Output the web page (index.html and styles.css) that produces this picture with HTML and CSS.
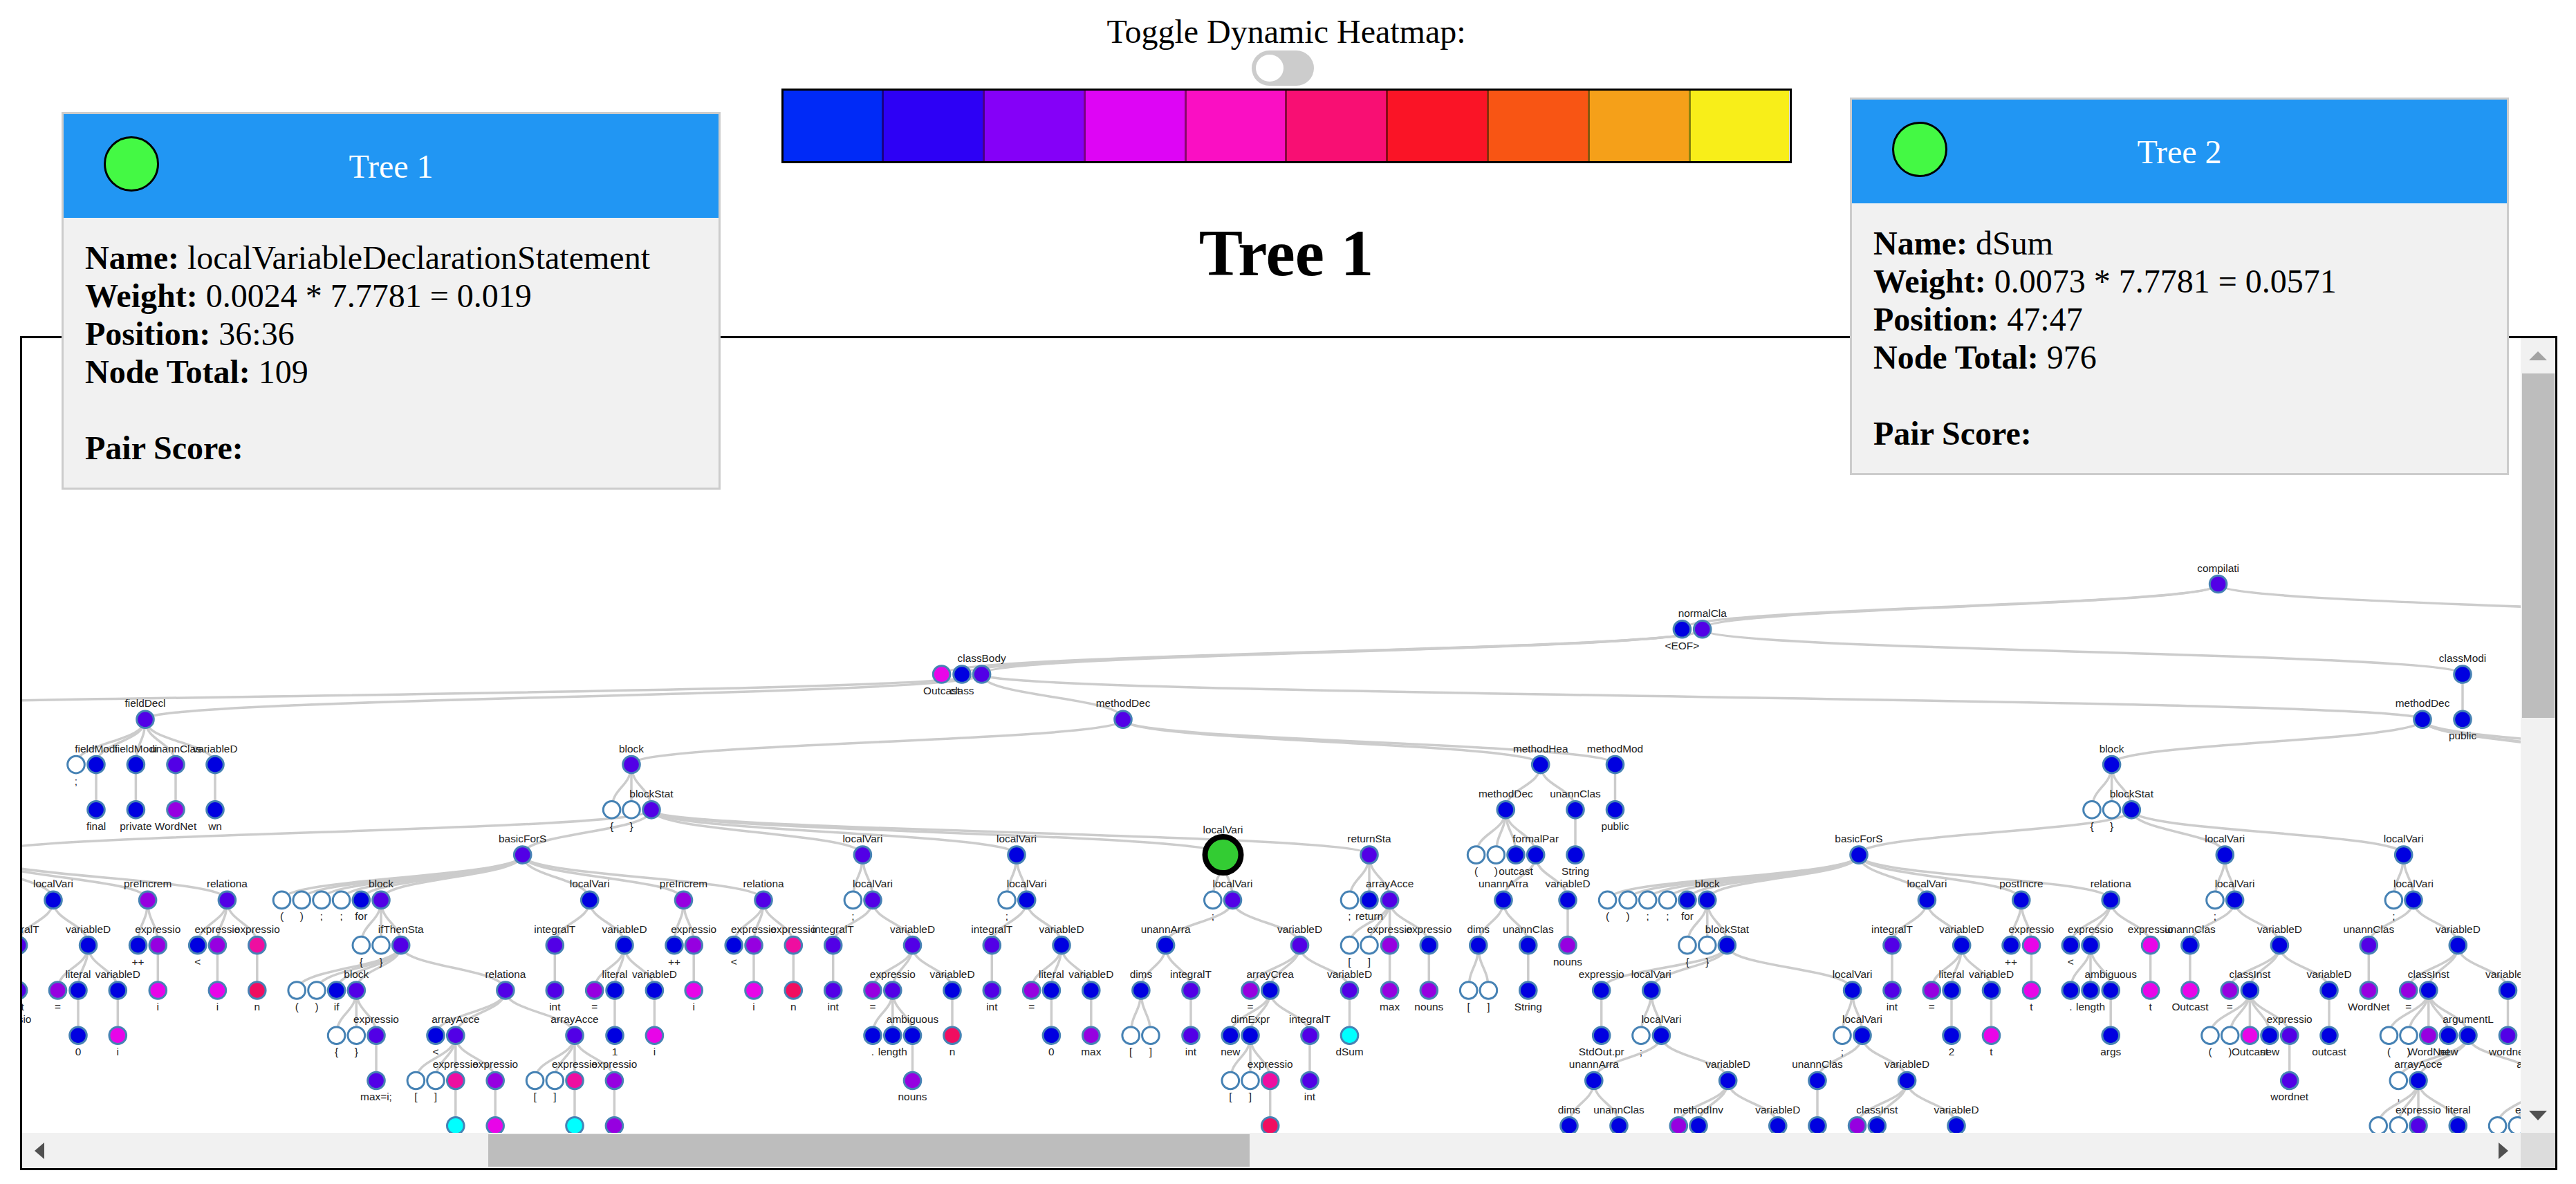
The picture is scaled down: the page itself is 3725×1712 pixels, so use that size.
FILE: index.html
```html
<!DOCTYPE html>
<html lang="en">

<head>
    <meta charset="UTF-8" />
    <meta name="viewport" content="width=device-width, initial-scale=1" />
    <title>Tree Compare</title>
    <link rel="stylesheet" href="styles.css">
</head>

<body>
    <div class="top">
        <div class="toggle-label">Toggle Dynamic Heatmap:</div>
        <div class="switch"><span class="knob"></span></div>
        <div class="legend">
            <span class="c1"></span><span class="c2"></span><span class="c3"></span><span class="c4"></span><span class="c5"></span>
            <span class="c6"></span><span class="c7"></span><span class="c8"></span><span class="c9"></span><span class="c10"></span>
        </div>
        <h1>Tree 1</h1>
    </div>

    <div class="info-card card-left">
        <div class="card-head">
            <span class="dot"></span>
            <span class="card-title">Tree 1</span>
        </div>
        <div class="card-body">
            <div><b>Name:</b> localVariableDeclarationStatement</div>
            <div><b>Weight:</b> 0.0024 * 7.7781 = 0.019</div>
            <div><b>Position:</b> 36:36</div>
            <div><b>Node Total:</b> 109</div>
            <div class="pair"><b>Pair Score:</b></div>
        </div>
    </div>

    <div class="info-card card-right">
        <div class="card-head">
            <span class="dot"></span>
            <span class="card-title">Tree 2</span>
        </div>
        <div class="card-body">
            <div><b>Name:</b> dSum</div>
            <div><b>Weight:</b> 0.0073 * 7.7781 = 0.0571</div>
            <div><b>Position:</b> 47:47</div>
            <div><b>Node Total:</b> 976</div>
            <div class="pair"><b>Pair Score:</b></div>
        </div>
    </div>

    <div class="frame">
        <svg id="tree" class="tree" viewBox="32 489 3613 1149"></svg>
        <div class="vbar">
            <div class="arrow"><span class="tri up"></span></div>
            <div class="vthumb"></div>
            <div class="grow"></div>
            <div class="arrow"><span class="tri down"></span></div>
        </div>
        <div class="hbar">
            <div class="arrow"><span class="tri left"></span></div>
            <div class="hgap"></div>
            <div class="hthumb"></div>
            <div class="grow"></div>
            <div class="arrow"><span class="tri right"></span></div>
        </div>
        <div class="corner"></div>
    </div>

    <script src="tree.js"></script>
</body>

</html>
```

FILE: styles.css
```css
body {
    margin: 0;
    background: white;
    font-family: "Liberation Serif", "Times New Roman", serif;
    font-size: 48px;
    line-height: 55px;
    color: black;
}

.top {
    padding: 18px 5px 0 0;
    text-align: center;
}

.switch {
    box-sizing: border-box;
    display: flex;
    align-items: center;
    width: 90px;
    height: 51px;
    margin: 0 auto;
    padding: 0 6px;
    position: relative;
    left: -5px;
    background: #ccc;
    border-radius: 26px;
}

.knob {
    width: 40px;
    height: 39px;
    background: white;
    border-radius: 50%;
}

.legend {
    box-sizing: border-box;
    display: flex;
    width: 1461px;
    height: 108px;
    margin: 4px auto 0;
    border: 3px solid black;
}

.legend span {
    flex: 1;
    border-left: 3px solid rgba(0, 0, 0, 0.45);
}

.legend span:first-child {
    border-left: none;
}

.c1 { background: #002af7; }
.c2 { background: #2d00f5; }
.c3 { background: #8500f8; }
.c4 { background: #de05f5; }
.c5 { background: #fa0fc3; }
.c6 { background: #f80f73; }
.c7 { background: #fa1426; }
.c8 { background: #f85514; }
.c9 { background: #f5a019; }
.c10 { background: #f8ee19; }

h1 {
    margin: 76px 0 65px;
    font-size: 95px;
    line-height: 109px;
    font-weight: bold;
}

.info-card {
    box-sizing: border-box;
    position: absolute;
    width: 953px;
    height: 546px;
    background: #f1f1f1;
    border: 3px solid #ccc;
    z-index: 2;
}

.card-left {
    left: 89px;
    top: 162px;
}

.card-right {
    left: 2675px;
    top: 141px;
}

.card-head {
    display: grid;
    grid-template-columns: 1fr auto 1fr;
    align-items: center;
    height: 150px;
    background: #2196f3;
    color: white;
}

.dot {
    box-sizing: border-box;
    width: 80px;
    height: 80px;
    margin: 0 0 6px 58px;
    background: #44f944;
    border: 3px solid black;
    border-radius: 50%;
}

.card-body {
    padding: 30px 31px;
}

.pair {
    margin-top: 55px;
}

.frame {
    box-sizing: border-box;
    display: grid;
    grid-template-columns: 3613px 50px;
    grid-template-rows: 1149px 51px;
    width: 3669px;
    height: 1206px;
    margin-left: 29px;
    border: 3px solid black;
}

.tree {
    display: block;
    width: 3613px;
    height: 1149px;
    font-family: "Liberation Sans", Arial, sans-serif;
    font-size: 15.4px;
}

.link {
    fill: none;
    stroke: #ccc;
    stroke-width: 3.5px;
}

.node {
    stroke: steelblue;
    stroke-width: 3px;
}

.node-label {
    fill: #222;
    text-anchor: middle;
}

.fill-w { fill: white; }
.fill-b { fill: #0000e0; }
.fill-i { fill: #5200e6; }
.fill-p { fill: #9600e0; }
.fill-m { fill: #e805e8; }
.fill-k { fill: #ee0ea0; }
.fill-r { fill: #f00e60; }
.fill-c { fill: #00ffff; }

.fill-g {
    fill: #33cc33;
    stroke: black;
    stroke-width: 8px;
}

.vbar {
    display: flex;
    flex-direction: column;
    align-items: center;
    background: #f1f1f1;
}

.hbar {
    display: flex;
    align-items: center;
    background: #f1f1f1;
}

.corner {
    background: #dcdcdc;
}

.grow {
    flex: 1;
}

.arrow {
    display: flex;
    flex: none;
    align-items: center;
    justify-content: center;
    width: 50px;
    height: 51px;
}

.vthumb {
    flex: none;
    width: 47px;
    height: 498px;
    background: #bdbdbd;
}

.hgap {
    flex: none;
    width: 624px;
}

.hthumb {
    flex: none;
    width: 1101px;
    height: 47px;
    background: #bdbdbd;
}

.tri {
    width: 0;
    height: 0;
    border-style: solid;
    border-color: transparent;
}

.up {
    border-width: 0 13px 13px;
    border-bottom-color: #a3a3a3;
}

.down {
    border-width: 14px 13px 0;
    border-top-color: #505050;
}

.left {
    border-width: 12px 14px 12px 0;
    border-right-color: #505050;
}

.right {
    border-width: 12px 0 12px 14px;
    border-left-color: #505050;
}
```

FILE: tree.js
```js
const svg = document.getElementById('tree');
const NS = 'http://www.w3.org/2000/svg';
const ROW_TOP = 844.5;
const ROW_STEP = 65.27;

function N(x, label, color, kids) {
    return { x, label, color, kids };
}

// kids === [] means the subtree is cut off by the scroll box, label still goes on top
const leftLoop = N(-30, '', 'i', [
    N(-30, '', 'i', [N(-30, '', 'i', [N(-30, '', 'i', [N(12.5, 'expressio', 'i', [])])])]),
    N(77, 'localVari', 'b', [
        N(26.6, 'integralT', 'i', [N(26.6, 'int', 'i')]),
        N(127.6, 'variableD', 'b', [
            N(83.5, '=', 'p'),
            N(113, 'literal', 'b', [N(113, '0', 'b')]),
            N(170.3, 'variableD', 'b', [N(170.3, 'i', 'm')])
        ])
    ]),
    N(213.6, 'preIncrem', 'p', [
        N(199.6, '++', 'b'),
        N(228.3, 'expressio', 'p', [N(228.3, 'i', 'm')])
    ]),
    N(328.4, 'relationa', 'i', [
        N(285.7, '<', 'b'),
        N(314.4, 'expressio', 'p', [N(314.4, 'i', 'm')]),
        N(371.8, 'expressio', 'k', [N(371.8, 'n', 'r')])
    ])
]);

const firstFor = N(755.7, 'basicForS', 'i', [
    N(407.5, '(', 'w'),
    N(436.2, ')', 'w'),
    N(465, ';', 'w'),
    N(493.6, ';', 'w'),
    N(522.3, 'for', 'b'),
    N(551, 'block', 'i', [
        N(522.3, '{', 'w'),
        N(551, '}', 'w'),
        N(579.7, 'ifThenSta', 'i', [
            N(429.2, '(', 'w'),
            N(458, ')', 'w'),
            N(486.6, 'if', 'b'),
            N(515.3, 'block', 'i', [
                N(486.6, '{', 'w'),
                N(515.3, '}', 'w'),
                N(544, 'expressio', 'i', [N(544, 'max=i;', 'i')])
            ]),
            N(730.9, 'relationa', 'i', [
                N(630, '<', 'b'),
                N(658.8, 'arrayAcce', 'i', [
                    N(601.4, '[', 'w'),
                    N(630, ']', 'w'),
                    N(658.8, 'expressio', 'k', [N(658.8, '', 'c')]),
                    N(716.2, 'expressio', 'p', [N(716.2, '', 'm')])
                ]),
                N(831, 'arrayAcce', 'i', [
                    N(773.6, '[', 'w'),
                    N(802.3, ']', 'w'),
                    N(831, 'expressio', 'k', [N(831, '', 'c')]),
                    N(888.4, 'expressio', 'p', [N(888.4, '', 'p')])
                ])
            ])
        ])
    ]),
    N(852.7, 'localVari', 'b', [
        N(802.3, 'integralT', 'i', [N(802.3, 'int', 'i')]),
        N(903, 'variableD', 'b', [
            N(859.7, '=', 'p'),
            N(889, 'literal', 'b', [N(889, '1', 'b')]),
            N(946.4, 'variableD', 'b', [N(946.4, 'i', 'm')])
        ])
    ]),
    N(988.5, 'preIncrem', 'p', [
        N(975, '++', 'b'),
        N(1003.2, 'expressio', 'p', [N(1003.2, 'i', 'm')])
    ]),
    N(1104, 'relationa', 'i', [
        N(1061.2, '<', 'b'),
        N(1090, 'expressio', 'p', [N(1090, 'i', 'm')]),
        N(1147.3, 'expressio', 'k', [N(1147.3, 'n', 'r')])
    ])
]);

const firstBlock = N(913, 'block', 'i', [
    N(884.6, '{', 'w'),
    N(913, '}', 'w'),
    N(942, 'blockStat', 'i', [
        leftLoop,
        firstFor,
        N(1247.4, 'localVari', 'i', [
            N(1233.4, ';', 'w'),
            N(1262, 'localVari', 'i', [
                N(1204.7, 'integralT', 'i', [N(1204.7, 'int', 'i')]),
                N(1319.5, 'variableD', 'i', [
                    N(1262, '=', 'p'),
                    N(1290.8, 'expressio', 'i', [
                        N(1262, '.', 'b'),
                        N(1290.8, 'length', 'b'),
                        N(1319.5, 'ambiguous', 'b', [N(1319.5, 'nouns', 'p')])
                    ]),
                    N(1377, 'variableD', 'b', [N(1377, 'n', 'r')])
                ])
            ])
        ]),
        N(1470, 'localVari', 'b', [
            N(1456, ';', 'w'),
            N(1484.7, 'localVari', 'b', [
                N(1434.3, 'integralT', 'i', [N(1434.3, 'int', 'i')]),
                N(1535, 'variableD', 'b', [
                    N(1491.7, '=', 'p'),
                    N(1520.4, 'literal', 'b', [N(1520.4, '0', 'b')]),
                    N(1577.8, 'variableD', 'b', [N(1577.8, 'max', 'p')])
                ])
            ])
        ]),
        N(1768.5, 'localVari', 'g', [
            N(1753.8, ';', 'w'),
            N(1782.5, 'localVari', 'i', [
                N(1685.6, 'unannArra', 'b', [
                    N(1649.9, 'dims', 'b', [N(1635.2, '[', 'w'), N(1663.9, ']', 'w')]),
                    N(1722, 'integralT', 'i', [N(1722, 'int', 'i')])
                ]),
                N(1879.5, 'variableD', 'i', [
                    N(1808, '=', 'p'),
                    N(1836.7, 'arrayCrea', 'b', [
                        N(1779.3, 'new', 'b'),
                        N(1808, 'dimExpr', 'b', [
                            N(1779.3, '[', 'w'),
                            N(1808, ']', 'w'),
                            N(1836.7, 'expressio', 'k', [N(1836.7, '', 'r')])
                        ]),
                        N(1894, 'integralT', 'i', [N(1894, 'int', 'i')])
                    ]),
                    N(1951.5, 'variableD', 'i', [N(1951.5, 'dSum', 'c')])
                ])
            ])
        ]),
        N(1980, 'returnSta', 'i', [
            N(1951.5, ';', 'w'),
            N(1980, 'return', 'b'),
            N(2009.6, 'arrayAcce', 'i', [
                N(1951.5, '[', 'w'),
                N(1980, ']', 'w'),
                N(2009.6, 'expressio', 'p', [N(2009.6, 'max', 'p')]),
                N(2066.3, 'expressio', 'b', [N(2066.3, 'nouns', 'p')])
            ])
        ])
    ])
]);

const secondFor = N(2688, 'basicForS', 'b', [
    N(2324.6, '(', 'w'),
    N(2354, ')', 'w'),
    N(2382.7, ';', 'w'),
    N(2411.4, ';', 'w'),
    N(2440, 'for', 'b'),
    N(2468.8, 'block', 'b', [
        N(2440, '{', 'w'),
        N(2468.8, '}', 'w'),
        N(2497.4, 'blockStat', 'b', [
            N(2315.7, 'expressio', 'b', [N(2315.7, 'StdOut.pr', 'b')]),
            N(2387.8, 'localVari', 'b', [
                N(2373, ';', 'w'),
                N(2402.4, 'localVari', 'b', [
                    N(2304.8, 'unannArra', 'b', [
                        N(2269, 'dims', 'b', []),
                        N(2341, 'unannClas', 'b', [])
                    ]),
                    N(2498.7, 'variableD', 'b', [
                        N(2427.3, '', 'p'),
                        N(2456, 'methodInv', 'b', []),
                        N(2570.8, 'variableD', 'b', [])
                    ])
                ])
            ]),
            N(2678.6, 'localVari', 'b', [
                N(2664, ';', 'w'),
                N(2693, 'localVari', 'b', [
                    N(2628, 'unannClas', 'b', [N(2628, '', 'b')]),
                    N(2757.6, 'variableD', 'b', [
                        N(2685.6, '', 'p'),
                        N(2714.3, 'classInst', 'b', []),
                        N(2829, 'variableD', 'b', [])
                    ])
                ])
            ])
        ])
    ]),
    N(2786.4, 'localVari', 'b', [
        N(2736, 'integralT', 'i', [N(2736, 'int', 'i')]),
        N(2836.7, 'variableD', 'b', [
            N(2793.3, '=', 'p'),
            N(2822, 'literal', 'b', [N(2822, '2', 'b')]),
            N(2879.5, 'variableD', 'b', [N(2879.5, 't', 'm')])
        ])
    ]),
    N(2922.8, 'postIncre', 'b', [
        N(2908, '++', 'b'),
        N(2937.5, 'expressio', 'm', [N(2937.5, 't', 'm')])
    ]),
    N(3052.2, 'relationa', 'b', [
        N(2994.3, '<', 'b'),
        N(3023, 'expressio', 'b', [
            N(2994.3, '.', 'b'),
            N(3023, 'length', 'b'),
            N(3052.2, 'ambiguous', 'b', [N(3052.2, 'args', 'b')])
        ]),
        N(3109.6, 'expressio', 'm', [N(3109.6, 't', 'm')])
    ])
]);

const secondBlock = N(3053.6, 'block', 'b', [
    N(3025, '{', 'w'),
    N(3053.6, '}', 'w'),
    N(3082.3, 'blockStat', 'b', [
        secondFor,
        N(3217.3, 'localVari', 'b', [
            N(3203, ';', 'w'),
            N(3231.6, 'localVari', 'b', [
                N(3166.9, 'unannClas', 'b', [N(3166.9, 'Outcast', 'm')]),
                N(3296.4, 'variableD', 'b', [
                    N(3224.2, '=', 'p'),
                    N(3253.4, 'classInst', 'b', [
                        N(3196, '(', 'w'),
                        N(3224.7, ')', 'w'),
                        N(3253.4, 'Outcast', 'm'),
                        N(3282, 'new', 'b'),
                        N(3310.7, 'expressio', 'i', [N(3310.7, 'wordnet', 'i')])
                    ]),
                    N(3368, 'variableD', 'b', [N(3368, 'outcast', 'b')])
                ])
            ])
        ]),
        N(3475.7, 'localVari', 'b', [
            N(3461.4, ';', 'w'),
            N(3490, 'localVari', 'b', [
                N(3425.3, 'unannClas', 'i', [N(3425.3, 'WordNet', 'p')]),
                N(3554.3, 'variableD', 'b', [
                    N(3482.7, '=', 'p'),
                    N(3511.8, 'classInst', 'b', [
                        N(3454.5, '(', 'w'),
                        N(3483, ')', 'w'),
                        N(3511.8, 'WordNet', 'p'),
                        N(3540.5, 'new', 'b'),
                        N(3569, 'argumentL', 'b', [
                            N(3468.3, ',', 'w'),
                            N(3497, 'arrayAcce', 'b', [
                                N(3439.2, '', 'w'),
                                N(3468.3, '', 'w'),
                                N(3497, 'expressio', 'i', []),
                                N(3554.3, 'literal', 'b', [])
                            ]),
                            N(3674, 'arrayAcce', 'b', [
                                N(3611.6, '', 'w'),
                                N(3640.3, '', 'w'),
                                N(3670, 'expressio', 'i', [])
                            ])
                        ])
                    ]),
                    N(3626.5, 'variableD', 'b', [N(3626.5, 'wordnet', 'i')])
                ])
            ])
        ])
    ])
]);

const root = N(3207.6, 'compilati', 'i', [
    N(2432.4, '<EOF>', 'b'),
    N(2461.7, 'normalCla', 'i', [
        N(1361.6, 'Outcast', 'm'),
        N(1391, 'class', 'b'),
        N(1419.6, 'classBody', 'i', [
            N(-721, '', 'b', []),
            N(210, 'fieldDecl', 'i', [
                N(110, ';', 'w'),
                N(139, 'fieldModi', 'b', [N(139, 'final', 'b')]),
                N(196.4, 'fieldModi', 'b', [N(196.4, 'private', 'b')]),
                N(254, 'unannClas', 'i', [N(254, 'WordNet', 'p')]),
                N(311, 'variableD', 'b', [N(311, 'wn', 'b')])
            ]),
            N(1624, 'methodDec', 'i', [
                firstBlock,
                N(2227.7, 'methodHea', 'b', [
                    N(2177.3, 'methodDec', 'b', [
                        N(2134.6, '(', 'w'),
                        N(2163.3, ')', 'w'),
                        N(2192, 'outcast', 'b'),
                        N(2220.7, 'formalPar', 'b', [
                            N(2174, 'unannArra', 'b', [
                                N(2137.8, 'dims', 'b', [N(2123.7, '[', 'w'), N(2152.4, ']', 'w')]),
                                N(2209.8, 'unannClas', 'b', [N(2209.8, 'String', 'b')])
                            ]),
                            N(2267, 'variableD', 'b', [N(2267, 'nouns', 'p')])
                        ])
                    ]),
                    N(2278, 'unannClas', 'b', [N(2278, 'String', 'b')])
                ]),
                N(2335.5, 'methodMod', 'b', [N(2335.5, 'public', 'b')])
            ]),
            N(3503, 'methodDec', 'b', [
                secondBlock,
                N(3785, '', 'b', []),
                N(3800, '', 'b', []),
                N(3903, '', 'b', [])
            ])
        ]),
        N(3561, 'classModi', 'b', [N(3561, 'public', 'b')])
    ]),
    N(4083, '', 'b', [])
]);

function add(tag, attrs, text) {
    const el = document.createElementNS(NS, tag);
    Object.keys(attrs).forEach(key => el.setAttribute(key, attrs[key]));
    if (text) el.textContent = text;
    svg.appendChild(el);
}

const nodes = [];

function walk(node, depth) {
    node.y = ROW_TOP + ROW_STEP * depth;
    nodes.push(node);
    (node.kids || []).forEach(kid => {
        const y = node.y + ROW_STEP;
        const mid = (node.y + y) / 2;
        add('path', {
            class: 'link',
            d: `M${node.x} ${node.y}C${node.x} ${mid},${kid.x} ${mid},${kid.x} ${y}`
        });
        walk(kid, depth + 1);
    });
}

walk(root, 0);

nodes.forEach(node => {
    add('circle', {
        class: 'node fill-' + node.color,
        cx: node.x,
        cy: node.y,
        r: node.color === 'g' ? 26 : 12.3
    });
});

nodes.forEach(node => {
    const lift = node.color === 'g' ? 31 : 18;
    add('text', {
        class: 'node-label',
        x: node.x,
        y: node.kids ? node.y - lift : node.y + 29
    }, node.label);
});
```
